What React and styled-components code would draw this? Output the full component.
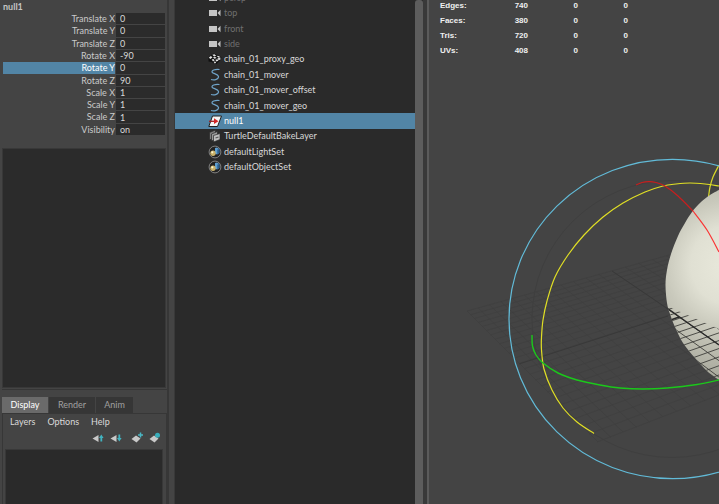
import React, { useState } from 'react';
import styled, { createGlobalStyle } from 'styled-components';

const GlobalStyle = createGlobalStyle`
  * { box-sizing: border-box; }
  body {
    margin: 0;
    background: #444444;
    color: #c8c8c8;
    font-family: Lato, "Noto Sans", sans-serif;
    font-size: 9px;
    line-height: 12px;
    overflow: hidden;
  }
  button, input { font: inherit; color: inherit; border: 0; padding: 0; margin: 0; border-radius: 0; }
  button { background: none; }
`;

const Workspace = styled.main`
  display: grid;
  grid-template-columns: 167px 8px 248px 6px minmax(0, 1fr);
  grid-template-rows: minmax(0, 1fr);
  height: 100vh;
`;

const SidePanel = styled.section`
  display: flex;
  flex-direction: column;
  min-width: 0;
  padding-left: 2px;
`;

const NodeName = styled.h1`
  margin: 0;
  padding: 1px 0 0 1px;
  height: 13px;
  font-size: 9px;
  line-height: 12px;
  font-weight: 700;
  color: #c4c4c4;
`;

const ChannelList = styled.form`
  display: grid;
  grid-auto-rows: minmax(0, 1fr);
  height: 123px;
  padding: 0 2px 0 1px;
`;

const Channel = styled.div`
  display: grid;
  grid-template-columns: minmax(0, 1fr) 49px;
  grid-template-rows: minmax(0, 1fr);
  gap: 1px;
  align-items: stretch;
  padding-bottom: 1px;
`;

const ChannelLabel = styled.label`
  text-align: right;
  line-height: 12px;
  color: ${p => (p.$selected ? '#ffffff' : '#cacaca')};
  background: ${p => (p.$selected ? '#5285a6' : 'transparent')};
`;

const ChannelInput = styled.input`
  width: 100%;
  min-width: 0;
  height: 100%;
  padding-left: 4px;
  background: #2b2b2b;
  color: #d8d8d8;
  font-size: 9px;
  line-height: 11px;
  outline: none;
`;

const EmptyWell = styled.div`
  height: 240px;
  margin: 12px 1px 0 0;
  background: #2b2b2b;
  border: 1px solid #383838;
`;

const LayerEditor = styled.section`
  display: flex;
  flex: 1;
  flex-direction: column;
  margin-top: 1px;
  padding-top: 7px;
  border-top: 1px solid #363636;
`;

const Tabs = styled.div`
  display: flex;
  gap: 1px;
`;

const Tab = styled.button`
  width: ${p => (p.$narrow ? 37 : 46)}px;
  height: 16px;
  background: ${p => (p.$active ? '#6a6a6a' : '#363636')};
  color: ${p => (p.$active ? '#ffffff' : '#a0a0a0')};
`;

const LayerPane = styled.div`
  display: flex;
  flex: 1;
  flex-direction: column;
  padding: 1px 3px 0 2px;
  border: 1px solid #373737;
  border-bottom: 0;
`;

const MenuBar = styled.nav`
  display: flex;
  gap: 12px;
  padding-left: 5px;
  button { height: 13px; color: #dadada; }
`;

const LayerTools = styled.div`
  display: flex;
  justify-content: flex-end;
  gap: 5px;
  height: 21px;
  padding: 4px 1px 0 0;
  button { width: 13px; height: 12px; }
  button:nth-child(3) { margin-left: 3px; }
  svg { display: block; }
`;

const LayerList = styled.div`
  flex: 1;
  background: #2a2a2a;
  border: 1px solid #383838;
  border-bottom: 0;
`;

const Divider = styled.div`
  border-left: 2px solid #373737;
  border-right: 1px solid #393939;
  background: #444444;
`;

const Outliner = styled.section`
  display: grid;
  grid-template-columns: minmax(0, 1fr) 8px;
  min-width: 0;
  background: #2a2a2a;
`;

const NodeList = styled.ul`
  display: grid;
  grid-auto-rows: 1fr;
  height: 185px;
  margin: -10px 0 0;
  padding: 0;
  list-style: none;
`;

const NodeButton = styled.button`
  display: flex;
  align-items: center;
  gap: 2px;
  width: 100%;
  height: 100%;
  padding-left: 33px;
  text-align: left;
  background: ${p => (p.$selected ? '#5285a6' : 'transparent')};
  color: ${p => (p.$selected ? '#ffffff' : p.$dim ? '#707070' : '#d8d8d8')};
  svg { flex: none; }
`;

const ScrollBar = styled.div`
  background: #5d5d5d;
  border-radius: 3px 3px 0 0;
`;

const ViewDivider = styled.div`
  background: #393939;
  border-right: 2px solid #5b5b5b;
`;

const Viewport = styled.section`
  position: relative;
  min-width: 0;
  overflow: hidden;
  background: #444444;
`;

const Scene = styled.svg`
  position: absolute;
  inset: 0;
  width: 100%;
  height: 100%;
`;

const Stats = styled.table`
  position: relative;
  table-layout: fixed;
  width: 188px;
  margin: -2px 0 0 11px;
  border-collapse: collapse;
  color: #f0f0f0;
  font-family: "Liberation Sans", Arial, sans-serif;
  font-size: 8px;
  font-weight: 700;
  th { width: 38px; text-align: left; }
  td { width: 50px; text-align: right; }
  th, td { height: 15px; padding: 0; line-height: 15px; }
`;

const channels = [
  ['Translate X', '0'], ['Translate Y', '0'], ['Translate Z', '0'],
  ['Rotate X', '-90'], ['Rotate Y', '0'], ['Rotate Z', '90'],
  ['Scale X', '1'], ['Scale Y', '1'], ['Scale Z', '1'], ['Visibility', 'on'],
];

const nodes = [
  ['persp', 'camera'], ['top', 'camera'], ['front', 'camera'], ['side', 'camera'],
  ['chain_01_proxy_geo', 'mesh'], ['chain_01_mover', 'curve'],
  ['chain_01_mover_offset', 'curve'], ['chain_01_mover_geo', 'curve'],
  ['null1', 'transform'], ['TurtleDefaultBakeLayer', 'layer'],
  ['defaultLightSet', 'set'], ['defaultObjectSet', 'set'],
];

const stats = [
  ['Edges:', 740, 0, 0], ['Faces:', 380, 0, 0], ['Tris:', 720, 0, 0], ['UVs:', 408, 0, 0],
];

const iconShapes = {
  camera: (
    <g fill="#c6c6c6">
      <path d="M1 4h8v6H1z" />
      <path d="M9.500 7l3-3.200v6.400z" />
    </g>
  ),
  mesh: (
    <g>
      <path d="M.5 5.500l4.500-4 4.500 1.500 4 2-1 3-4 4-3.500-1-1-1-3.500-.5z" fill="#101010" />
      <path
        d="M.800 5.800l2-1.800 1.700 1.200-2 1.700zM4.300 2.800l2.200-.5 1.700 1.400-2.200.7zM8.500 3.800l2.200.2 2 1.200-2.200.5zM5 5.200l2-.5 1.700 1.300-2.200.8zM9.300 6.300l2.400-.3 1.300 1-2.300 1.200zM3.700 7.500l1.800-.6 1.200 1.500-1.800.8zM7.300 7.800l2.200-.5.9 1.500-2 .8zM5.500 9.800l1.800-.3.8 1.200-1.300.8z"
        fill="#e2e2e2"
      />
    </g>
  ),
  curve: (
    <path d="M11.500 1.500C7 .8 3 2.600 4.200 4.300c.9 1.300 5.800 1.600 6.300 4C11 10.800 6.500 12.800 3 11.500" fill="none" stroke="#6fa3c8" strokeWidth="1.200" />
  ),
  transform: (
    <g>
      <path d="M4.500 2h9l-4 10.500H.8z" fill="#f5f5f5" stroke="#202020" strokeWidth="1" />
      <path d="M1 7.300H7" stroke="#a02020" strokeWidth="1.300" />
      <path d="M6 4.300l4.500 3L6 10z" fill="#d32626" />
    </g>
  ),
  layer: (
    <g stroke="#292929" strokeWidth=".7">
      <path d="M1.500 3.500l6-2.500v7l-6 3z" fill="#7e7e7e" />
      <path d="M3.500 5l6-2.500v7l-6 2.500z" fill="#9a9a9a" />
      <path d="M5.500 6.500L12 4.500v6L5.500 13z" fill="#bdbdbd" />
      <path d="M7.500 9l3-1" stroke="#555" strokeWidth="1.200" />
    </g>
  ),
  set: (
    <g>
      <circle cx="7" cy="7" r="5.900" fill="#222" stroke="#8a8a8a" strokeWidth=".9" />
      <path d="M7 3l2-.5L11.300 4v4L9 9.500 7 8.500z" fill="#5c9dd0" />
      <path d="M9.300 4.500l2-.5v4l-2 1.500z" fill="#2c5f8e" />
      <circle cx="5" cy="8.200" r="2.700" fill="#c9b169" />
      <circle cx="4.300" cy="7.300" r="1.100" fill="#fff6cf" />
    </g>
  ),
};

const NodeIcon = ({ kind }) => (
  <svg width="14" height="14" viewBox="0 0 14 14" aria-hidden="true">{iconShapes[kind]}</svg>
);

const arrowTile = <path d="M.5 6.500L6.500 3v7z" fill="#c9c9c9" />;
const wholeTile = <path d="M.5 7L5 3.500L9.500 6.500L5.500 10.500z" fill="#c9c9c9" />;

const layerTools = [
  ['Move layer up', <>{arrowTile}<path d="M7 6l2.300-3.500L11.600 6h-1.400v3.500H8.400V6z" fill="#41b3c0" /></>],
  ['Move layer down', <>{arrowTile}<path d="M7 6l2.300 3.500L11.600 6h-1.400V2.500H8.400V6z" fill="#41b3c0" /></>],
  ['New empty layer', <>{wholeTile}<path d="M9.500.5v5M7 3h5" stroke="#4ab7c4" strokeWidth="1.500" /></>],
  ['New layer from selected', <>{wholeTile}<circle cx="8.500" cy="3.300" r="2.500" fill="#39aebb" /></>],
];

const bottomEdge = x => 442 - 0.386 * (x - 597);

const risingLines = Array.from({ length: 25 }, (_, i) => {
  const t = i / 24;
  const s = t / (t + 1.5 * (1 - t));
  const x = 467 + 130 * s;
  const y = 311 + 131 * s;
  return { x1: x, y1: y, x2: 719, y2: y - (0.277 + 0.109 * s) * (719 - x) };
});

const fallingLines = Array.from({ length: 21 }, (_, i) => {
  const u = i / 24;
  const x = 467 + (319 * u) / (u + 1.2 * (1 - u));
  const y = 311 - 0.277 * (x - 467);
  const m = 1 - (0.31 * (x - 467)) / 145;
  const end = (bottomEdge(0) - y + m * x) / (m + 0.386);
  return { x1: x, y1: y, x2: end, y2: bottomEdge(end) };
});

const GridLines = props => (
  <g {...props}>
    {[...risingLines, ...fallingLines].map((l, i) => <line key={i} {...l} />)}
  </g>
);

/* Catmull-Rom spline through the given points, as a cubic path. */
const smooth = pts => pts.slice(0, -1).reduce((d, p, i) => {
  const a = pts[i - 1] || p;
  const b = pts[i + 1];
  const c = pts[i + 2] || b;
  return `${d}C${p[0] + (b[0] - a[0]) / 6} ${p[1] + (b[1] - a[1]) / 6} ${b[0] - (c[0] - p[0]) / 6} ${b[1] - (c[1] - p[1]) / 6} ${b[0]} ${b[1]}`;
}, `M${pts[0][0]} ${pts[0][1]}`);

const spherePath = `${smooth([[719, 190], [710, 195], [701, 202], [692, 212], [685, 223], [678, 236], [671, 254], [667, 270], [665.5, 285], [667, 303], [670, 314], [675, 327], [683, 343], [695, 358], [707, 371], [719, 380]])}Z`;

const yellowRing = smooth([[719, 186], [705, 184], [690, 183], [676, 184], [663, 186], [645, 192], [623, 203], [603, 217], [584, 235], [568, 255], [555, 277], [547, 301], [543, 320], [541.5, 337], [541.5, 350], [544, 369], [552, 390], [563, 408], [577, 422], [594, 433.5]]);

const greenRing = smooth([[532, 335], [532.5, 346], [536, 355], [543, 363], [558, 373], [577, 380], [600, 385], [620, 388], [643, 389], [667, 388], [697, 384.5], [719, 380]]);

const ViewportScene = () => (
  <Scene viewBox="429 0 290 504" preserveAspectRatio="xMinYMin slice" role="img" aria-label="Perspective view with rotate manipulator">
    <defs>
      <radialGradient id="shade" gradientUnits="userSpaceOnUse" cx="730" cy="265" r="112">
        <stop offset="0" stopColor="#e9e9dc" />
        <stop offset=".35" stopColor="#e0e0d3" />
        <stop offset=".58" stopColor="#c9c9bc" />
        <stop offset="1" stopColor="#aaaa9e" />
      </radialGradient>
      <clipPath id="sphere"><path d={spherePath} /></clipPath>
      <clipPath id="floor"><path d="M660 303L719 329V390H660Z" /></clipPath>
    </defs>
    <GridLines stroke="#3e3e3e" strokeWidth=".6" fill="none" />
    <path d="M612 271L668 309M519 364L668 316" stroke="#393939" strokeWidth="1" />
    <ellipse cx="672" cy="319" rx="140" ry="138.500" fill="none" stroke="#3f3f3f" />
    <path d={smooth([[719, 165], [713, 177], [710, 187], [708.5, 197]])} fill="none" stroke="#d9d928" strokeWidth="1.200" />
    <path d={spherePath} fill="url(#shade)" />
    <g clipPath="url(#sphere)">
      <g clipPath="url(#floor)"><GridLines stroke="#3e3e3b" strokeWidth=".9" /></g>
      <path d="M667 308L719 345M668 321L679 317" stroke="#292929" strokeWidth="1.400" />
    </g>
    <g fill="none" strokeWidth="1.200">
      <ellipse cx="672.500" cy="319" rx="163.500" ry="159.700" stroke="#62bbd8" />
      <path stroke="#e0df25" d={yellowRing} />
      <path stroke="#1bc81b" strokeWidth="1.400" d={greenRing} />
      <path stroke="#c81e1e" d={smooth([[636, 185], [642, 182.5], [649, 181.7], [656, 182.5], [665, 186], [678, 196], [693, 211]])} />
      <path stroke="#fa3434" d={smooth([[693, 211], [707, 230], [719, 252]])} />
    </g>
  </Scene>
);

export default function App() {
  const [selectedNode, setSelectedNode] = useState('null1');
  const [selectedTab, setSelectedTab] = useState('Display');
  return (
    <>
      <GlobalStyle />
      <Workspace>
        <SidePanel>
          <NodeName>null1</NodeName>
          <ChannelList>
            {channels.map(([name, value]) => {
              const id = name.replace(' ', '-');
              return (
                <Channel key={name}>
                  <ChannelLabel htmlFor={id} $selected={name === 'Rotate Y'}>{name}</ChannelLabel>
                  <ChannelInput id={id} defaultValue={value} />
                </Channel>
              );
            })}
          </ChannelList>
          <EmptyWell />
          <LayerEditor>
            <Tabs role="tablist">
              {['Display', 'Render', 'Anim'].map(name => (
                <Tab
                  key={name}
                  role="tab"
                  aria-selected={name === selectedTab}
                  $active={name === selectedTab}
                  $narrow={name === 'Anim'}
                  onClick={() => setSelectedTab(name)}
                >
                  {name}
                </Tab>
              ))}
            </Tabs>
            <LayerPane>
              <MenuBar>
                <button>Layers</button>
                <button>Options</button>
                <button>Help</button>
              </MenuBar>
              <LayerTools>
                {layerTools.map(([label, drawing]) => (
                  <button key={label} aria-label={label}>
                    <svg width="13" height="12" viewBox="0 0 13 12" aria-hidden="true">{drawing}</svg>
                  </button>
                ))}
              </LayerTools>
              <LayerList />
            </LayerPane>
          </LayerEditor>
        </SidePanel>
        <Divider />
        <Outliner>
          <NodeList>
            {nodes.map(([name, kind]) => (
              <li key={name}>
                <NodeButton
                  $selected={name === selectedNode}
                  $dim={kind === 'camera'}
                  onClick={() => setSelectedNode(name)}
                >
                  <NodeIcon kind={kind} />
                  {name}
                </NodeButton>
              </li>
            ))}
          </NodeList>
          <ScrollBar />
        </Outliner>
        <ViewDivider />
        <Viewport>
          <ViewportScene />
          <Stats>
            <tbody>
              {stats.map(([label, ...values]) => (
                <tr key={label}>
                  <th scope="row">{label}</th>
                  {values.map((v, i) => <td key={i}>{v}</td>)}
                </tr>
              ))}
            </tbody>
          </Stats>
        </Viewport>
      </Workspace>
    </>
  );
}
